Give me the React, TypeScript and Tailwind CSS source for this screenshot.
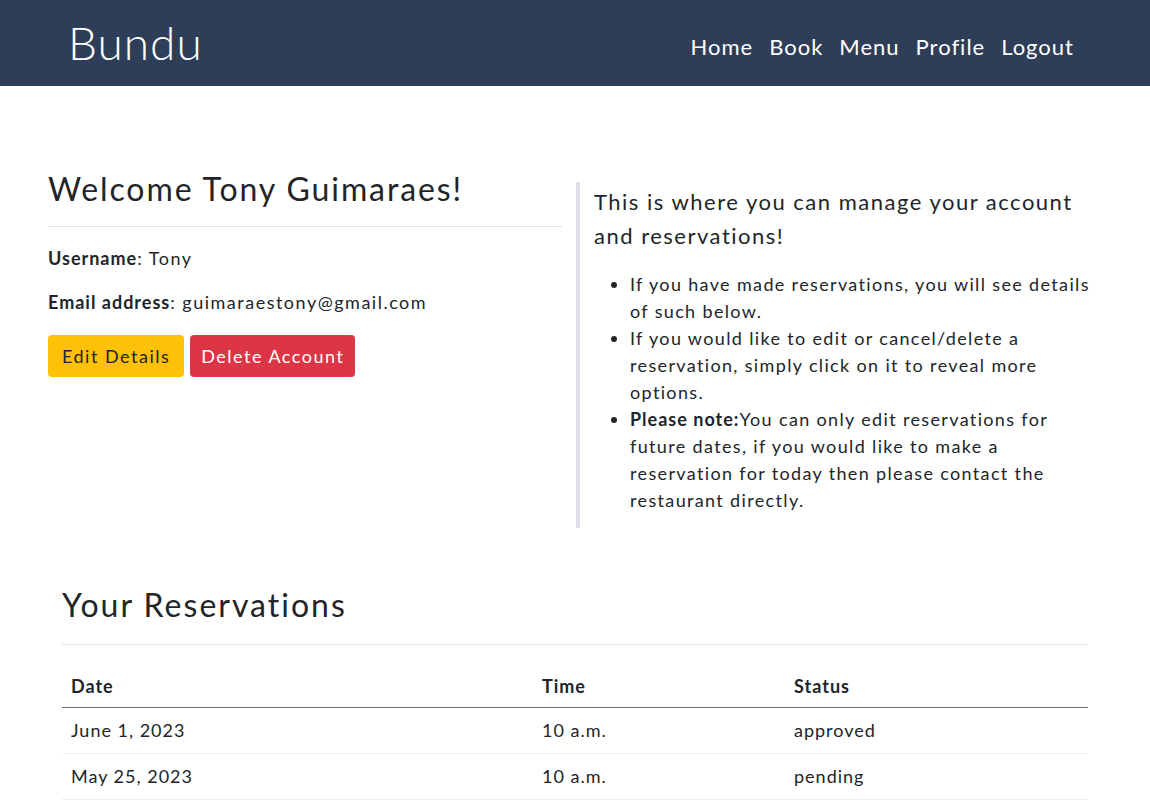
const rows = [
  { date: "June 1, 2023", time: "10 a.m.", status: "approved" },
  { date: "May 25, 2023", time: "10 a.m.", status: "pending" },
];

export default function App() {
  return (
    <div
      className="min-h-screen bg-white text-[#212529] tracking-[1.5px]"
      style={{ fontFamily: "Lato, 'Liberation Sans', sans-serif" }}
    >
      <nav className="flex h-[86px] items-center justify-between bg-[#2e3e58] pl-[68px] pr-[76px]">
        <span className="text-[46px] font-light leading-none tracking-[1px] text-white">
          Bundu
        </span>
        <ul className="flex gap-[16px] pt-[6px] text-[22px] tracking-[1px] text-white">
          <li>Home</li>
          <li>Book</li>
          <li>Menu</li>
          <li>Profile</li>
          <li>Logout</li>
        </ul>
      </nav>

      <main className="px-[48px] pt-[84px]">
        <section className="flex">
          <div className="w-[514px] shrink-0">
            <h1 className="text-[32px] leading-[38px] tracking-[1.9px]">Welcome Tony Guimaraes!</h1>
            <hr className="mt-[18px] border-t border-[#e3e3e3]" />
            <p className="mt-[18px] text-[18px] leading-[27px]">
              <strong className="font-bold tracking-[1px]">Username</strong>: Tony
            </p>
            <p className="mt-[17px] text-[18px] leading-[27px]">
              <strong className="font-bold tracking-[1px]">Email address</strong>: guimaraestony@gmail.com
            </p>
            <div className="mt-[19px] flex gap-[6px]">
              <button className="h-[42px] rounded-[4px] bg-[#ffc107] px-[14px] text-[18px] text-[#212529]">
                Edit Details
              </button>
              <button className="h-[42px] rounded-[4px] bg-[#dc3545] px-[11px] text-[18px] text-white">
                Delete Account
              </button>
            </div>
          </div>

          <div className="ml-[14px] mt-[12px] w-[526px] border-l-4 border-[#dee2e6] pb-[14px] pl-[14px]">
            <h2 className="mt-[3px] text-[22px] leading-[34px]">
              This is where you can manage your account and reservations!
            </h2>
            <ul className="mt-[18px] list-disc pl-[36px] text-[18px] leading-[27px] tracking-[1.35px]">
              <li>If you have made reservations, you will see details of such below.</li>
              <li>
                If you would like to edit or cancel/delete a reservation, simply click on it to
                reveal more options.
              </li>
              <li>
                <strong className="font-bold tracking-[1px]">Please note:</strong>You can only edit reservations
                for future dates, if you would like to make a reservation for today then please
                contact the restaurant directly.
              </li>
            </ul>
          </div>
        </section>

        <section className="ml-[14px] mt-[58px] w-[1026px]">
          <h2 className="text-[32px] leading-[38px] tracking-[2px]">Your Reservations</h2>
          <hr className="mt-[20px] border-t border-[#e3e3e3]" />
          <table className="mt-[18px] w-full border-collapse text-left text-[18px] tracking-[1px]">
            <thead>
              <tr className="border-b-[1.5px] border-[#6c6c6c]">
                <th className="w-[471px] px-[9px] pb-[7px] pt-[10px] font-bold">Date</th>
                <th className="w-[252px] px-[9px] pb-[7px] pt-[10px] font-bold">Time</th>
                <th className="px-[9px] pb-[7px] pt-[10px] font-bold">Status</th>
              </tr>
            </thead>
            <tbody>
              {rows.map((r) => (
                <tr key={r.date} className="h-[46px] border-b border-[#eeeeee]">
                  <td className="px-[9px]">{r.date}</td>
                  <td className="px-[9px]">{r.time}</td>
                  <td className="px-[9px]">{r.status}</td>
                </tr>
              ))}
            </tbody>
          </table>
        </section>
      </main>
    </div>
  );
}
